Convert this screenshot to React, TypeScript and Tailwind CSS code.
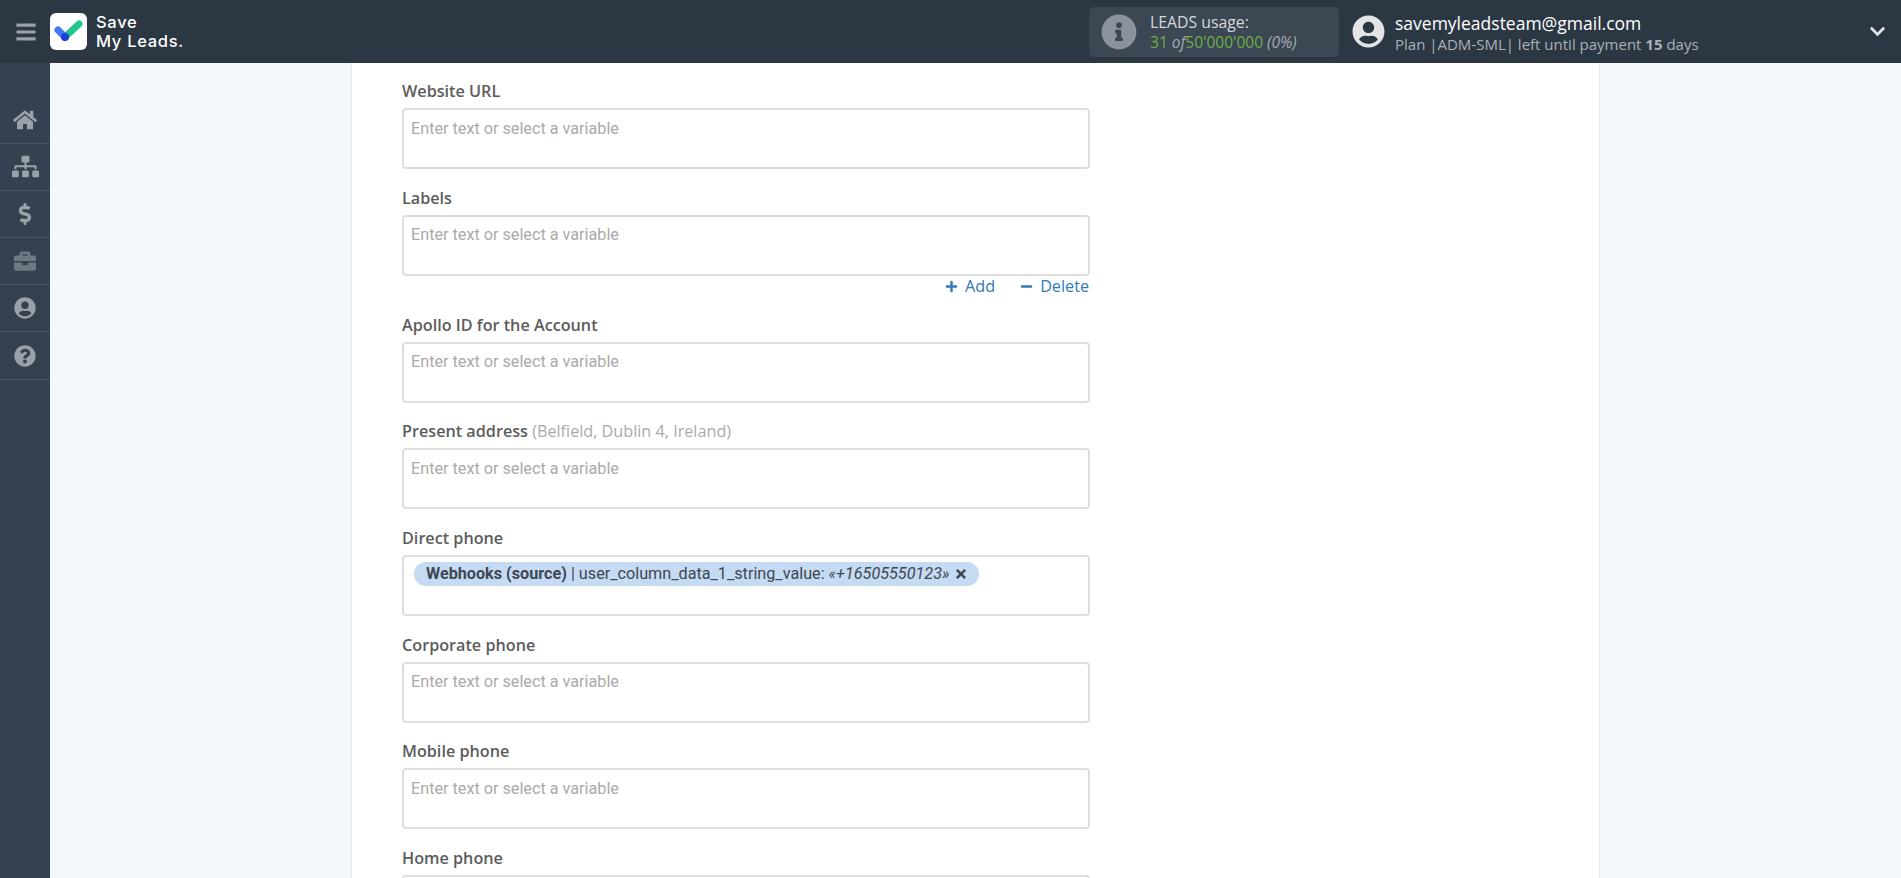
import React from "react";
import {
  FaBars,
  FaBriefcase,
  FaChevronDown,
  FaDollarSign,
  FaHome,
  FaInfoCircle,
  FaMinus,
  FaPlus,
  FaQuestionCircle,
  FaSitemap,
  FaTimes,
  FaUserCircle,
} from "react-icons/fa";

const sideItems = [
  { icon: FaHome, size: 24, cls: "text-[#9aa1aa]" },
  { icon: FaSitemap, size: 27, cls: "text-[#9aa1aa]" },
  { icon: FaDollarSign, size: 22, cls: "text-[#9aa1aa]" },
  { icon: FaBriefcase, size: 22, cls: "text-[#6f7985]" },
  { icon: FaUserCircle, size: 22, cls: "text-[#9aa1aa]" },
  { icon: FaQuestionCircle, size: 22, cls: "text-[#9aa1aa]" },
];

const Logo = () => (
  <div className="flex h-[37px] w-[37px] items-center justify-center rounded-[6px] bg-white">
    <svg width="29" height="24" viewBox="0 0 29 24" fill="none">
      <path d="M11 17 L25 4" stroke="#22c58b" strokeWidth="7" strokeLinecap="round" />
      <path d="M4 10 L11 17" stroke="#3f78f2" strokeWidth="7" strokeLinecap="round" />
      <circle cx="11" cy="17" r="4" fill="#1c3fd8" />
    </svg>
  </div>
);

const Header = () => (
  <header className="flex h-[63px] shrink-0 items-center bg-[#2c3744] font-['Open_Sans',sans-serif]">
    <div className="flex w-[50px] justify-center pl-[1px]">
      <FaBars size={22} className="text-[#9ba1a8]" />
    </div>
    <Logo />
    <div className="ml-[9px] font-['Inter',sans-serif] text-[16.5px] leading-[19px] font-medium tracking-[0.7px] text-white">
      <div>Save</div>
      <div>My Leads.</div>
    </div>

    <div className="ml-[905px] flex h-[50px] w-[250px] items-center rounded-[5px] bg-[#3b4753] pl-[12px]">
      <FaInfoCircle size={36} className="text-[#8b929b]" />
      <div className="ml-[13px] text-[15.5px] leading-[20px]">
        <div className="text-[15.8px] text-[#d5d9dc]">LEADS usage:</div>
        <div className="text-[#6fae44]">
          31 <i className="text-[#a5abb2]">of</i>50'000'000{" "}
          <i className="text-[#a5abb2]">(0%)</i>
        </div>
      </div>
    </div>

    <FaUserCircle size={33} className="ml-[13px] text-[#e4e4e4]" />
    <div className="ml-[10px] mt-[4px]">
      <div className="text-[17.5px] leading-[21px] text-white">savemyleadsteam@gmail.com</div>
      <div className="text-[15px] leading-[20px] text-[#aab0b7]">
        Plan |ADM-SML| left until payment <b>15</b> days
      </div>
    </div>
    <FaChevronDown size={17} className="ml-auto mr-[15px] text-[#e6e8ea]" />
  </header>
);

const Sidebar = () => (
  <aside className="w-[50px] shrink-0 bg-[#354150] pt-[33.5px]">
    {sideItems.map((item, i) => {
      const Icon = item.icon;
      return (
        <div key={i} className="flex h-[47.2px] items-center justify-center border-b border-[#4a5562]">
          <Icon size={item.size} className={item.cls} />
        </div>
      );
    })}
  </aside>
);

type FieldProps = {
  label: string;
  hint?: string;
  chip?: boolean;
  actions?: boolean;
  noText?: boolean;
};

const Field = ({ label, hint, chip, actions, noText }: FieldProps) => (
  <div className="mb-[18.7px]">
    <div className="mb-[7px] text-[16.2px] leading-[20px] font-semibold text-[#5c5c5c]">
      {label}
      {hint && <span className="font-normal text-[#aaaaaa]"> {hint}</span>}
    </div>
    <div className="h-[61px] rounded-[4px] border-2 border-[#dedede] bg-white pl-[7px] pt-[5px] font-['Roboto',sans-serif] text-[16.2px] leading-[24px]">
      {chip && (
        <span className="ml-[3px] inline-flex h-[24px] items-center rounded-full bg-[#c5daf3] pl-[12px] pr-[11px] text-[#3f4752]">
          <b>Webhooks (source)</b>
          <span className="ml-[4px]">| user_column_data_1_string_value:</span>
          <i className="ml-[4px]">«+16505550123»</i>
          <FaTimes size={14} className="ml-[5px]" />
        </span>
      )}
      {!chip && !noText && (
        <span className="relative top-[1.5px] text-[#aaaaaa]">Enter text or select a variable</span>
      )}
    </div>
    {actions && (
      <div className="-mb-[0.7px] flex h-[21px] justify-end gap-[25px] pr-[1px] text-[16.2px] leading-[20px] text-[#337ab7]">
        <span className="flex items-center gap-[7px]">
          <FaPlus size={13} />
          Add
        </span>
        <span className="flex items-center gap-[7px]">
          <FaMinus size={13} />
          Delete
        </span>
      </div>
    )}
  </div>
);

export default function App() {
  return (
    <div className="flex h-screen flex-col overflow-hidden">
      <Header />
      <div className="flex min-h-0 flex-1">
        <Sidebar />
        <main className="flex-1 overflow-hidden bg-[#f4f7fc] pl-[301px] font-['Open_Sans',sans-serif]">
          <div className="h-full w-[1249px] border-x border-[#e6eaf0] bg-white pl-[50px] pt-[18px]">
            <div className="w-[688px]">
              <Field label="Website URL" />
              <Field label="Labels" actions />
              <Field label="Apollo ID for the Account" />
              <Field label="Present address" hint="(Belfield, Dublin 4, Ireland)" />
              <Field label="Direct phone" chip />
              <Field label="Corporate phone" />
              <Field label="Mobile phone" />
              <Field label="Home phone" noText />
            </div>
          </div>
        </main>
      </div>
    </div>
  );
}
